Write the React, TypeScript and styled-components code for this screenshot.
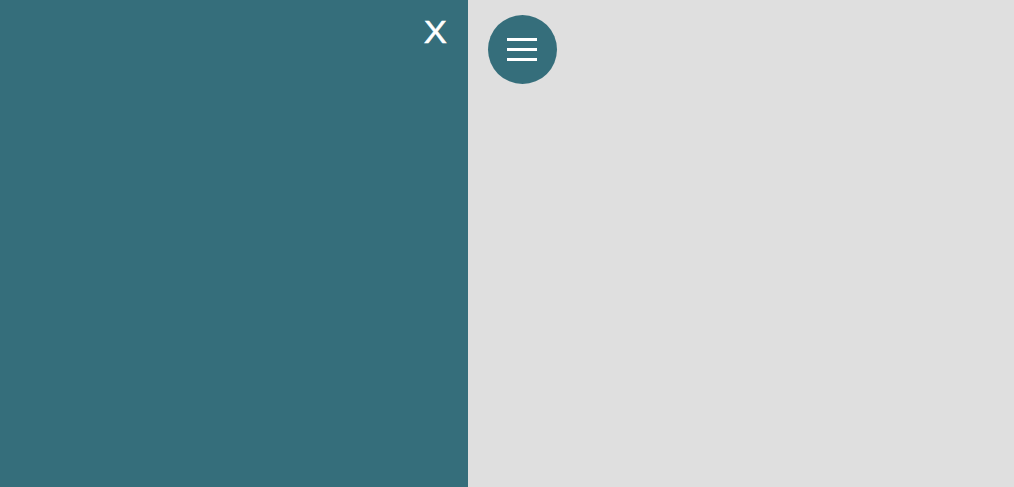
import React from "react";
import styled, { createGlobalStyle } from "styled-components";

const Global = createGlobalStyle`
  html, body, #root { margin: 0; padding: 0; height: 100%; }
  body { font-family: "Liberation Sans", Arial, sans-serif; overflow: hidden; }
`;

const Layout = styled.div`
  display: flex;
  width: 100%;
  height: 100vh;
  background: #dfdfdf;
`;

const Sidebar = styled.aside`
  width: 468px;
  flex-shrink: 0;
  background: #356e7b;
  display: flex;
  justify-content: flex-end;
  align-items: flex-start;
`;

const CloseButton = styled.button`
  border: none;
  background: transparent;
  color: #ffffff;
  font-family: "Liberation Sans", Arial, sans-serif;
  font-size: 31px;
  line-height: 1;
  padding: 0;
  margin: 17px 22px 0 0;
  cursor: pointer;
  transform: scaleX(1.12);
  -webkit-text-stroke: 0.5px #ffffff;
`;

const Main = styled.main`
  flex: 1;
  padding: 15px 20px;
`;

const MenuButton = styled.button`
  width: 69px;
  height: 69px;
  border-radius: 50%;
  border: none;
  background: #356e7b;
  display: flex;
  flex-direction: column;
  align-items: center;
  justify-content: center;
  gap: 7px;
  padding: 0;
  cursor: pointer;
`;

const Bar = styled.span`
  display: block;
  width: 30px;
  height: 3px;
  margin-left: -1px;
  background: #ffffff;
`;

export default function App() {
  return (
    <>
      <Global />
      <Layout>
        <Sidebar>
          <CloseButton>X</CloseButton>
        </Sidebar>
        <Main>
          <MenuButton>
            <Bar />
            <Bar />
            <Bar />
          </MenuButton>
        </Main>
      </Layout>
    </>
  );
}
